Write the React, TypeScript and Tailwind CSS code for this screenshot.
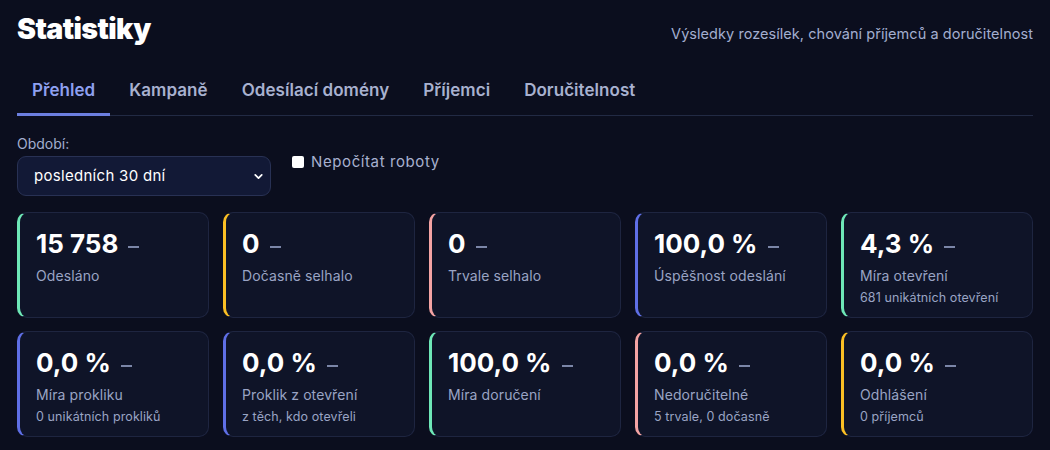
import { ChevronDown } from 'lucide-react';

type Stat = {
  value: string;
  label: string;
  sub?: string;
  accent: string;
};

const stats: Stat[] = [
  { value: '15 758', label: 'Odesláno', accent: 'border-l-[#6ee7b7]' },
  { value: '0', label: 'Dočasně selhalo', accent: 'border-l-[#fbbf24]' },
  { value: '0', label: 'Trvale selhalo', accent: 'border-l-[#f4a3a3]' },
  { value: '100,0 %', label: 'Úspěšnost odeslání', accent: 'border-l-[#5f6fe6]' },
  { value: '4,3 %', label: 'Míra otevření', sub: '681 unikátních otevření', accent: 'border-l-[#6ee7b7]' },
  { value: '0,0 %', label: 'Míra prokliku', sub: '0 unikátních prokliků', accent: 'border-l-[#5f6fe6]' },
  { value: '0,0 %', label: 'Proklik z otevření', sub: 'z těch, kdo otevřeli', accent: 'border-l-[#5f6fe6]' },
  { value: '100,0 %', label: 'Míra doručení', accent: 'border-l-[#6ee7b7]' },
  { value: '0,0 %', label: 'Nedoručitelné', sub: '5 trvale, 0 dočasně', accent: 'border-l-[#f4a3a3]' },
  { value: '0,0 %', label: 'Odhlášení', sub: '0 příjemců', accent: 'border-l-[#fbbf24]' },
];

const tabs = ['Přehled', 'Kampaně', 'Odesílací domény', 'Příjemci', 'Doručitelnost'];

function StatCard({ stat }: { stat: Stat }) {
  return (
    <div
      className={`h-[106px] rounded-[10px] border border-[#1e2540] border-l-[3px] bg-[#0f1428] pl-[16px] pr-3 pt-[15px] ${stat.accent}`}
    >
      <div className="flex items-center gap-[10px]">
        <span className="text-[26px] font-bold leading-[32px] text-white">{stat.value}</span>
        <span className="mt-[6px] h-[2px] w-[11px] bg-[#7b86a8]" />
      </div>
      <div className="mt-[7px] text-[14px] leading-[18px] tracking-[0.1px] text-[#9aa4c4]">{stat.label}</div>
      {stat.sub && <div className="mt-[5px] text-[12.5px] leading-[16px] tracking-[0.1px] text-[#9aa4c4]">{stat.sub}</div>}
    </div>
  );
}

export default function App() {
  return (
    <main
      className="min-h-[450px] w-full bg-[#0b0e1e] px-[17px] pt-[11px] text-white"
      style={{ fontFamily: 'Inter, "Noto Sans", sans-serif' }}
    >
      <header className="flex items-center justify-between">
        <h1 className="text-[28.5px] font-black leading-[36px] tracking-[-0.6px] text-white">Statistiky</h1>
        <p className="mt-[9px] text-[14.5px] tracking-[0.05px] text-[#a3aed0]">
          Výsledky rozesílek, chování příjemců a doručitelnost
        </p>
      </header>

      <nav className="mt-[32px] flex gap-[4px] border-b border-[#222a44]">
        {tabs.map((t, i) => (
          <div
            key={t}
            className={`px-[15px] pb-[12px] text-[17px] font-semibold leading-[22px] tracking-[0.05px] ${
              i === 0 ? 'mb-[-1px] border-b-[3px] border-[#6c7fe0] text-[#8fa0f0]' : 'mb-[2px] text-[#a8b1cf]'
            }`}
          >
            {t}
          </div>
        ))}
      </nav>

      <div className="mt-[19px] flex items-start gap-[21px]">
        <div>
          <div className="text-[14px] leading-[18px] text-[#a3aed0]">Období:</div>
          <div className="mt-[3px] flex h-[40px] w-[254px] items-center justify-between rounded-[9px] border border-[#283154] bg-[#121936] pl-[16px] pr-[5px]">
            <span className="text-[15px] tracking-[0.3px] text-white">posledních 30 dní</span>
            <ChevronDown className="h-[13px] w-[13px] text-white" strokeWidth={3.2} />
          </div>
        </div>
        <label className="mt-[16px] flex items-center gap-[7px]">
          <span className="h-[12px] w-[12px] rounded-[2px] bg-white" />
          <span className="text-[15px] tracking-[0.6px] text-[#a8b1cf]">Nepočítat roboty</span>
        </label>
      </div>

      <section className="mt-[16px] grid grid-cols-5 gap-x-[14px] gap-y-[13px]">
        {stats.map((s, i) => (
          <StatCard key={i} stat={s} />
        ))}
      </section>
    </main>
  );
}
